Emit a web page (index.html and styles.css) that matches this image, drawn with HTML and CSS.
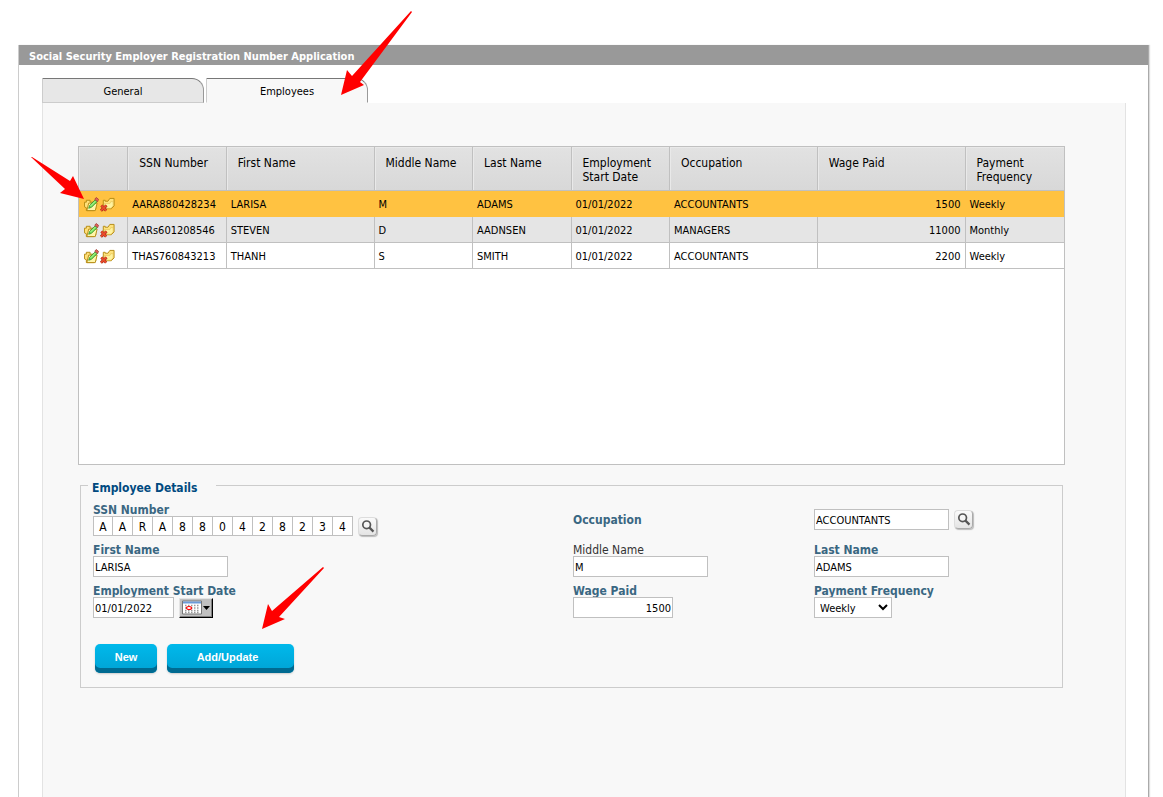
FILE: index.html
```html
<!DOCTYPE html>
<html lang="en">
<head>
<meta charset="utf-8">
<title>Social Security Employer Registration Number Application</title>
<link rel="stylesheet" href="styles.css">
</head>
<body>
<svg class="defs" aria-hidden="true">
  <defs>
    <symbol id="folder-edit" viewBox="0 0 16 16">
      <path d="M.5 5.500h2v-2h4v2h6v7l-2 2H2.500v-3l-2-1z" fill="#ffe07a" stroke="#b48a12"/>
      <path d="M3 14.500l2-8h9l-2 8z" fill="#fff6a8" stroke="#b48a12"/>
      <path d="M5 12l1-3 6-6 2 2-6 6z" fill="#6fdc58" stroke="#2f8a2a" stroke-width=".8"/>
      <path d="M7 9.500l5-5" stroke="#c5ff9c"/>
      <path d="M11.500 2.500l1.500-2 2.500 2-1 2.500z" fill="#e2645a" stroke="#a03a34" stroke-width=".8"/>
    </symbol>
    <symbol id="folder-delete" viewBox="0 0 16 16">
      <path d="M3.500 12.500v-9h2v1h3l2-3h4.500v8l-3 3z" fill="#ffe37c" stroke="#b48a12"/>
      <path d="M4.500 12v-5h6l1-2h2.500v4.500L11.500 12z" fill="#fff3a0" stroke="#dcb444" stroke-width=".5"/>
      <path d="M1.500 9l5 5.500M7 9l-6 5.500" stroke="#a02a14" stroke-width="3"/>
      <path d="M1.500 9l5 5.500M7 9l-6 5.500" stroke="#ec4c2c" stroke-width="1.800"/>
    </symbol>
    <symbol id="lens" viewBox="0 0 20 20">
      <circle cx="9" cy="8" r="4.500" fill="#f5f5f5" stroke="#555" stroke-width="2"/>
      <path d="M12 11l5 5" stroke="#555" stroke-width="2.600"/>
    </symbol>
  </defs>
</svg>

<main class="panel">
  <h1 class="panel-title">Social Security Employer Registration Number Application</h1>
  <div class="tabs" role="tablist">
    <button class="tab" type="button" role="tab" aria-selected="false">General</button>
    <button class="tab tab-active" type="button" role="tab" aria-selected="true">Employees</button>
  </div>
  <section class="content">
    <div class="grid-box">
      <table class="grid">
        <colgroup>
          <col class="c-icons"><col class="c-name"><col class="c-wide"><col class="c-name"><col class="c-name"><col class="c-name"><col class="c-wide"><col class="c-wide"><col class="c-name">
        </colgroup>
        <thead>
          <tr><th></th><th>SSN Number</th><th>First Name</th><th>Middle Name</th><th>Last Name</th><th>Employment Start Date</th><th>Occupation</th><th>Wage Paid</th><th>Payment Frequency</th></tr>
        </thead>
        <tbody>
          <tr class="selected">
            <td><div class="actions"><button class="icon-btn" type="button" aria-label="Edit"><svg><use href="#folder-edit"/></svg></button><button class="icon-btn" type="button" aria-label="Delete"><svg><use href="#folder-delete"/></svg></button></div></td>
            <td>AARA880428234</td><td>LARISA</td><td>M</td><td>ADAMS</td><td>01/01/2022</td><td>ACCOUNTANTS</td><td class="num">1500</td><td>Weekly</td>
          </tr>
          <tr class="alt">
            <td><div class="actions"><button class="icon-btn" type="button" aria-label="Edit"><svg><use href="#folder-edit"/></svg></button><button class="icon-btn" type="button" aria-label="Delete"><svg><use href="#folder-delete"/></svg></button></div></td>
            <td>AARs601208546</td><td>STEVEN</td><td>D</td><td>AADNSEN</td><td>01/01/2022</td><td>MANAGERS</td><td class="num">11000</td><td>Monthly</td>
          </tr>
          <tr>
            <td><div class="actions"><button class="icon-btn" type="button" aria-label="Edit"><svg><use href="#folder-edit"/></svg></button><button class="icon-btn" type="button" aria-label="Delete"><svg><use href="#folder-delete"/></svg></button></div></td>
            <td>THAS760843213</td><td>THANH</td><td>S</td><td>SMITH</td><td>01/01/2022</td><td>ACCOUNTANTS</td><td class="num">2200</td><td>Weekly</td>
          </tr>
        </tbody>
      </table>
    </div>

    <fieldset class="details">
      <legend>Employee Details</legend>
      <div class="form">
        <div class="field">
          <label for="ssn1">SSN Number</label>
          <div class="row">
            <div class="ssn">
              <input id="ssn1" value="A" maxlength="1"><input aria-label="SSN character 2" value="A" maxlength="1"><input aria-label="SSN character 3" value="R" maxlength="1"><input aria-label="SSN character 4" value="A" maxlength="1"><input aria-label="SSN character 5" value="8" maxlength="1"><input aria-label="SSN character 6" value="8" maxlength="1"><input aria-label="SSN character 7" value="0" maxlength="1"><input aria-label="SSN character 8" value="4" maxlength="1"><input aria-label="SSN character 9" value="2" maxlength="1"><input aria-label="SSN character 10" value="8" maxlength="1"><input aria-label="SSN character 11" value="2" maxlength="1"><input aria-label="SSN character 12" value="3" maxlength="1"><input aria-label="SSN character 13" value="4" maxlength="1">
            </div>
            <button class="lens-btn" type="button" aria-label="Search SSN"><svg><use href="#lens"/></svg></button>
          </div>
        </div>
        <label class="middle" for="occupation">Occupation</label>
        <div class="row middle">
          <input class="text" id="occupation" value="ACCOUNTANTS">
          <button class="lens-btn" type="button" aria-label="Search occupation"><svg><use href="#lens"/></svg></button>
        </div>

        <div class="field"><label for="first">First Name</label><input class="text" id="first" value="LARISA"></div>
        <div class="field"><label class="optional" for="mid">Middle Name</label><input class="text" id="mid" value="M"></div>
        <div class="field"><label for="last">Last Name</label><input class="text" id="last" value="ADAMS"></div>

        <div class="field">
          <label for="start">Employment Start Date</label>
          <div class="row">
            <input class="text date" id="start" value="01/01/2022">
            <button class="cal-btn" type="button" aria-label="Choose date">
              <svg class="cal-icon" viewBox="0 0 30 17">
                <path d="M1.500 2h19v13h-19z" fill="#fff" stroke="#777"/>
                <path d="M2 2.500h18v2H2z" fill="#6b9bd8"/>
                <path d="M4 6.500h15M4 9h15M4 11.500h15M4 13.500h15" stroke="#999" stroke-width="1.500" stroke-dasharray="1.500 1.500"/>
                <ellipse cx="8" cy="9" rx="2.500" ry="1.500" fill="#fff" stroke="#f00" stroke-width="1.200"/>
                <path d="M22 7h7l-3.500 4z" fill="#000"/>
              </svg>
            </button>
          </div>
        </div>
        <div class="field"><label for="wage">Wage Paid</label><input class="text wage" id="wage" value="1500"></div>
        <div class="field"><label for="freq">Payment Frequency</label><select id="freq"><option>Weekly</option><option>Monthly</option></select></div>
      </div>
      <div class="buttons">
        <button class="btn" type="button">New</button>
        <button class="btn btn-wide" type="button">Add/Update</button>
      </div>
    </fieldset>
  </section>
</main>

<svg class="arrow arrow-tab" viewBox="0 0 72 84" aria-hidden="true"><path d="M70 0L71 1L19 71L23 74L0 84L6 59L11 65Z" fill="#f00"/></svg>
<svg class="arrow arrow-row" viewBox="0 0 54 42" aria-hidden="true"><path d="M0 0L1 0L39 24L42 19L53 42L29 36L34 32Z" fill="#f00"/></svg>
<svg class="arrow arrow-save" viewBox="0 0 62 64" aria-hidden="true"><path d="M61 0L62 1L17 50L23 52L0 62L6 37L10 44Z" fill="#f00"/></svg>
</body>
</html>
```
FILE: styles.css
```css
* { box-sizing: border-box; }

body {
  position: relative;
  display: flex;
  flex-direction: column;
  min-height: 100vh;
  margin: 0;
  padding: 45px 14px 0 18px;
  background: #fff;
  color: #000;
  font: 11px/14px "DejaVu Sans Condensed", "DejaVu Sans", sans-serif;
}

button, input, select { font: inherit; color: inherit; margin: 0; }

.defs { position: absolute; width: 0; height: 0; }

.panel {
  flex: 1;
  display: flex;
  flex-direction: column;
  border-left: 1px solid #ccc;
  border-right: 1px solid #aaa;
  box-shadow: 1px 0 1px #ddd;
}

.panel-title {
  margin: 0;
  padding: 5px 10px 1px;
  background: #999;
  color: #fff;
  font-size: 11px;
  line-height: 14px;
  font-weight: bold;
}

.tabs {
  display: flex;
  gap: 2px;
  margin: 13px 22px 0 23px;
}

.tab {
  width: 162px;
  height: 25px;
  padding: 2px 0 0;
  border: 1px solid #ccc;
  border-top-color: #777;
  border-right-color: #999;
  border-radius: 0 12px 0 0;
  background: #e7e7e7;
}

.tab-active {
  background: #f8f8f8;
  border-bottom-color: #f8f8f8;
}

.content {
  flex: 1;
  margin: 0 22px 0 23px;
  padding: 43px 60px 16px 35px;
  border: solid #e3e3e3;
  border-width: 0 1px;
  background: #f8f8f8;
}

.grid-box {
  min-height: 319px;
  border: 1px solid #c0c0c0;
  background: #fff;
}

.grid {
  width: 100%;
  table-layout: fixed;
  border-collapse: separate;
  border-spacing: 0;
}

.c-icons { width: 5%; }
.c-name { width: 10%; }
.c-wide { width: 15%; }

.grid th {
  height: 44px;
  padding: 9px 10px 6px 11px;
  border: solid #c0c0c0;
  border-width: 0 1px 1px 0;
  background: linear-gradient(#e2e2e2, #d8d8d8);
  box-shadow: inset 1px 1px #e9e9e9;
  font-size: 12px;
  font-weight: normal;
  text-align: left;
  vertical-align: top;
}

.grid td {
  height: 26px;
  padding: 2px 4px 0;
  border: solid #c0c0c0;
  border-width: 0 1px 1px 0;
}

.grid th:last-child, .grid td:last-child { border-right: 0; }
.grid .num { text-align: right; }
.alt td { background: #e5e5e5; }
.grid .selected td { background: #ffc241; border-color: #ffc241; }

.actions { display: flex; padding-left: 1px; }

.icon-btn {
  width: 16px;
  height: 16px;
  padding: 0;
  border: 0;
  background: none;
}

.icon-btn svg { display: block; width: 15px; height: 15px; }
.icon-btn use, .lens-btn use { fill: none; }

.details {
  min-width: 0;
  margin: 11px 2px 0;
  padding: 7px 7px 14px;
  border: 1px solid #ccc;
}

.details legend {
  padding: 5px 19px 0 4px;
  color: #004a80;
  font-size: 12px;
  font-weight: bold;
}

.form {
  display: grid;
  grid-template-columns: 480fr 241fr 236fr;
  gap: 6px 0;
  padding: 0 5px;
}

.form label {
  padding-top: 2px;
  color: #3a6782;
  font-size: 12px;
  line-height: 12px;
  font-weight: bold;
}

.form label.optional { color: #333; font-weight: normal; }

.field {
  display: flex;
  flex-direction: column;
  align-items: flex-start;
}

.middle { align-self: center; }

.row { display: flex; gap: 5px; align-items: center; }

.text {
  width: 135px;
  height: 21px;
  padding: 2px 1px 0;
  border: 1px solid #c0c0c0;
  background: #fff;
}

.date { width: 81px; }
.wage { width: 100px; text-align: right; }

.form select {
  width: 78px;
  height: 21px;
  padding: 2px 1px 0;
  border: 1px solid #c0c0c0;
  border-radius: 0;
  background: #fff;
}

.ssn { display: flex; }

.ssn input {
  width: 20px;
  height: 20px;
  padding: 2px 0 0;
  border: solid #c0c0c0;
  border-width: 1px 1px 1px 0;
  background: #fff;
  font-size: 12px;
  text-align: center;
}

.ssn input:first-child { border-left-width: 1px; }

.lens-btn {
  width: 19px;
  height: 19px;
  padding: 0;
  border: 1px solid #ddd;
  border-right-color: #aaa;
  border-bottom-color: #aaa;
  border-radius: 4px;
  background: linear-gradient(#fafafa, #e4e4e4);
  box-shadow: 1px 1px 1px #bbb;
}

.lens-btn svg { display: block; width: 17px; height: 17px; }

.cal-btn {
  width: 34px;
  height: 20px;
  padding: 0 1px;
  border: 1px solid #e4e4e4;
  border-right-color: #000;
  border-bottom-color: #000;
  background: #c0c0c0;
  box-shadow: inset -1px -1px #808080;
}

.cal-icon { display: block; width: 30px; height: 17px; }

.buttons {
  display: flex;
  gap: 10px;
  margin-top: 26px;
  padding-left: 7px;
}

.btn {
  min-width: 62px;
  height: 29px;
  padding: 0 8px 3px;
  border: 0;
  border-radius: 5px;
  background: linear-gradient(#00b9eb, #00a2d4);
  box-shadow: inset 0 -5px #006a91, 0 1px 2px #ccc;
  color: #fff;
  font: bold 11px/14px "Liberation Sans", Arial, sans-serif;
}

.btn-wide { min-width: 127px; padding-right: 14px; }

.arrow { position: absolute; pointer-events: none; }
.arrow-tab { left: 341px; top: 11px; width: 72px; height: 84px; }
.arrow-row { left: 31px; top: 157px; width: 54px; height: 42px; }
.arrow-save { left: 262px; top: 567px; width: 62px; height: 64px; }
```
